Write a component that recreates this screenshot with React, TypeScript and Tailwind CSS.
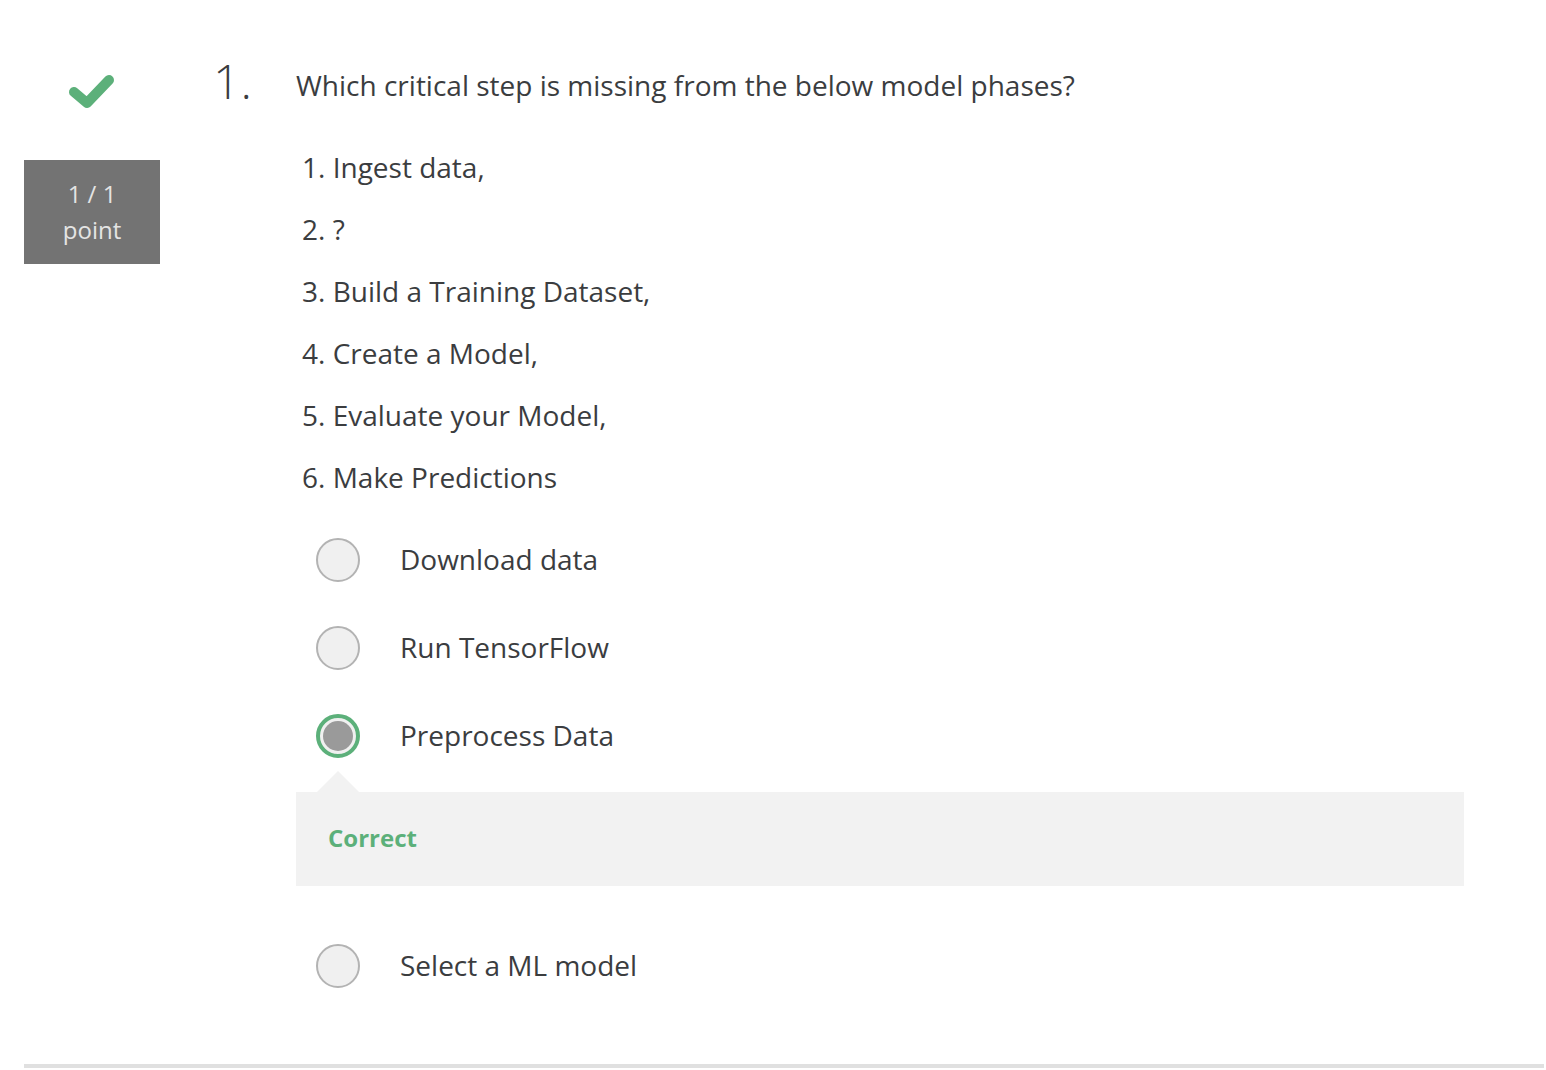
import React from 'react'

const steps = [
  '1. Ingest data,',
  '2. ?',
  '3. Build a Training Dataset,',
  '4. Create a Model,',
  '5. Evaluate your Model,',
  '6. Make Predictions',
]

function Radio({ selected }: { selected?: boolean }) {
  if (selected) {
    return (
      <span className="flex h-[44px] w-[44px] shrink-0 items-center justify-center rounded-full border-[4px] border-[#5cb07a] bg-[#f0f0f0]">
        <span className="h-[30px] w-[30px] rounded-full bg-[#9a9a9a]" />
      </span>
    )
  }
  return <span className="h-[44px] w-[44px] shrink-0 rounded-full border-2 border-[#b3b3b3] bg-[#f0f0f0]" />
}

function Option({ label, selected }: { label: string; selected?: boolean }) {
  return (
    <div className="flex h-[88px] items-center pl-[20px]">
      <Radio selected={selected} />
      <span className="ml-[40px] pb-[2px] text-[28px] text-[#3b3d3f]">{label}</span>
    </div>
  )
}

export default function App() {
  return (
    <div className="min-h-screen bg-white font-['Open_Sans',sans-serif] text-[#3b3d3f]">
      <div className="flex pl-6">
        {/* score column */}
        <div className="flex w-[136px] shrink-0 flex-col items-center">
          <svg width="52" height="40" viewBox="0 0 52 40" className="mt-[72px]">
            <polyline
              points="8,20 21,31 43,8"
              fill="none"
              stroke="#5cb07a"
              strokeWidth="10"
              strokeLinecap="round"
              strokeLinejoin="round"
            />
          </svg>
          <div className="mt-[48px] flex h-[104px] w-[136px] flex-col items-center justify-center bg-[#737373] text-[24px] leading-[36px] text-[#e4e4e4]">
            <span>1 / 1</span>
            <span>point</span>
          </div>
        </div>

        {/* number */}
        <div className="w-[136px] shrink-0 pl-[53px] pt-[57px] text-[48px] leading-[48px] font-light text-[#3b3d3f]">
          1.
        </div>

        {/* question body */}
        <div className="flex w-[1168px] flex-col">
          <p className="mt-[65px] text-[28px] leading-[40px]">
            Which critical step is missing from the below model phases?
          </p>
          <ul className="mt-[31px] pl-[6px]">
            {steps.map((s) => (
              <li key={s} className="text-[28px] leading-[62px]">
                {s}
              </li>
            ))}
          </ul>
          <div className="mt-[8px]">
            <Option label="Download data" />
            <Option label="Run TensorFlow" />
            <Option label="Preprocess Data" selected />
          </div>
          <div className="relative mt-[12px] flex h-[94px] items-center bg-[#f2f2f2] pb-[2px] pl-[32px]">
            <span className="absolute -top-[21px] left-[21px] h-0 w-0 border-r-[21px] border-b-[21px] border-l-[21px] border-r-transparent border-b-[#f2f2f2] border-l-transparent" />
            <span className="text-[24px] font-bold text-[#5cb07a]">Correct</span>
          </div>
          <div className="mt-[36px]">
            <Option label="Select a ML model" />
          </div>
        </div>
      </div>
      <div className="mt-[54px] ml-6 mr-[2px] h-[4px] bg-[#e0e0e0]" />
    </div>
  )
}
